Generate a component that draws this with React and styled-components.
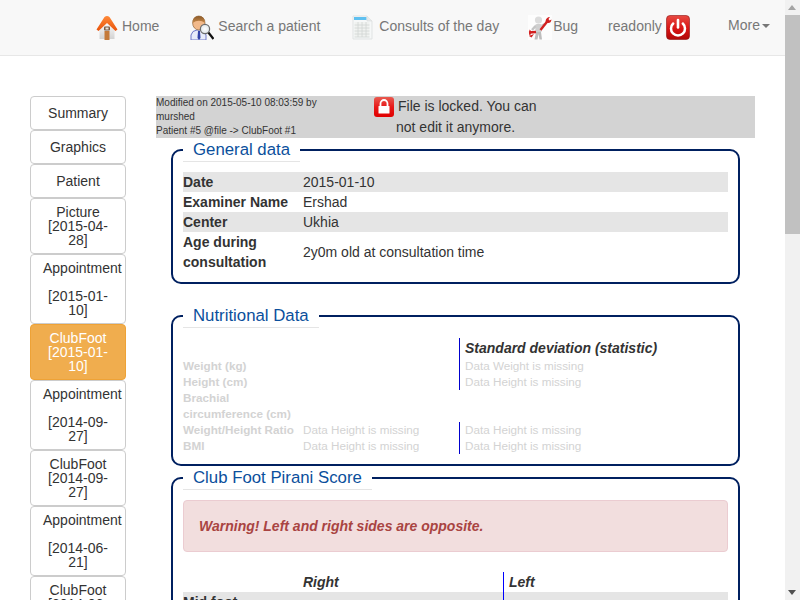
import React from "react";
import styled, { createGlobalStyle } from "styled-components";

const Global = createGlobalStyle`
  body { margin: 0; background: #fff; color: #333; font: 14px/20px "Liberation Sans", Arial, sans-serif; }
  * { box-sizing: border-box; }
`;

const Page = styled.div`
  padding-right: 15px;
`;
const ScrollRail = styled.div`
  position: fixed; top: 0; right: 0; bottom: 0; width: 15px; background: #f1f1f1;
`;
const ScrollThumb = styled.div`
  position: absolute; top: 15px; left: 0; width: 15px; height: 219px; background: #c1c1c1;
`;
const ScrollArrow = styled.i`
  position: absolute; left: 3px; width: 0; height: 0;
  border-left: 4.5px solid transparent; border-right: 4.5px solid transparent;
  ${p => p.$down
    ? "bottom: 5px; border-top: 5px solid #505050;"
    : "top: 5px; border-bottom: 5px solid #a3a3a3;"}
`;
const Navbar = styled.nav`
  display: flex; height: 56px; padding-left: 81px;
  background: #f8f8f8; border-bottom: 1px solid #e7e7e7; color: #777;
`;
const NavItem = styled.a`
  display: flex; align-items: flex-start; height: 55px; gap: ${p => p.$gap ?? 4}px;
  padding: 15px ${p => p.$right ?? 15}px 0 15px;
  & > span { line-height: 22px; }
`;
const MoreItem = styled.a`
  margin-left: auto; padding: 15px 15px 0; line-height: 20px; display: flex; align-items: flex-start;
`;
const Caret = styled.i`
  width: 0; height: 0; margin: 9px 0 0 2px;
  border-top: 4px solid #777; border-left: 4px solid transparent; border-right: 4px solid transparent;
`;
const Body = styled.div`
  display: flex; align-items: flex-start; padding: 40px 30px 0; gap: 30px; min-height: 1505px;
`;
const Side = styled.aside`
  width: 96px; flex: none; display: flex; flex-direction: column;
`;
const SideBtn = styled.button`
  display: block; width: 96px; min-height: 34px; padding: 6px 12px; margin: 0;
  font: 14px/14px "Liberation Sans", Arial, sans-serif; text-align: center;
  color: ${p => p.$active ? "#fff" : "#333"};
  background: ${p => p.$active ? "#f0ad4e" : "#fff"};
  border: 1px solid ${p => p.$active ? "#eea236" : "#ccc"};
  border-radius: 4px;
`;
const Main = styled.main`
  width: 599px; flex: none;
`;
const LockBar = styled.div`
  display: flex; height: 42px; background: #d3d3d3;
`;
const Meta = styled.div`
  width: 200px; font-size: 10px; line-height: 14px;
`;
const LockIconBox = styled.div`
  margin-left: 18px; width: 22px; padding-top: 1px; flex: none;
`;
const LockText = styled.div`
  width: 150px; line-height: 21px; text-indent: 2px;
  & > span { display: block; text-indent: 0; }
`;
const Field = styled.fieldset`
  min-width: 0; margin: 0 15px ${p => p.$spaced ? 20 : 0}px; padding: 0 10px 10px;
  border: 2px solid #002060; border-radius: 10px;
`;
const Legend = styled.legend`
  padding: 0 10px; margin: 0 0 10px; font-size: 16.8px; line-height: 23px; color: #0b4f9c;
  border-bottom: 1px solid #e5e5e5;
`;
const Row = styled.div`
  display: grid; grid-template-columns: 120px 1fr; align-items: center;
  background: ${p => p.$stripe ? "#e5e5e5" : "transparent"};
`;
const Label = styled.b`font-weight: 700;`;
const NutriGrid = styled.div`
  display: grid; grid-template-columns: 120px 156px 1fr;
  font-size: 11.7px; line-height: 16px; color: #d3d3d3;
`;
const NutriLabel = styled.b`font-weight: 700;`;
const DevCell = styled.div`
  border-left: ${p => p.$line ? "1px solid #0000cd" : "none"};
  padding-left: ${p => p.$line ? 5 : 6}px;
`;
const DevHead = styled(DevCell)`
  grid-column: 3; font: italic 700 14px/20px "Liberation Sans", Arial, sans-serif; color: #333;
`;
const Alert = styled.div`
  margin-bottom: 20px; padding: 15px; background: #f2dede; border: 1px solid #ebccd1; border-radius: 4px;
  color: #a94442; font-weight: 700; font-style: italic;
`;
const ScoreRow = styled.div`
  display: grid; grid-template-columns: 120px 200px 1fr; height: 20px;
  background: ${p => p.$stripe ? "#e5e5e5" : "transparent"};
`;
const ScoreHead = styled.b`font-style: italic; font-weight: 700;`;
const ScoreSide = styled(ScoreHead)`
  border-left: 1px solid #0000ff; padding-left: 5px;
`;

const HomeIcon = () => (
  <svg width="22" height="25" viewBox="0 0 22 25">
    <defs>
      <linearGradient id="roof" x1="0" y1="0" x2="0" y2="1"><stop offset="0" stopColor="#ff8a3a"/><stop offset="1" stopColor="#e8520a"/></linearGradient>
      <linearGradient id="wall" x1="0" y1="0" x2="0" y2="1"><stop offset="0" stopColor="#ffffff"/><stop offset="1" stopColor="#d2d2d2"/></linearGradient>
    </defs>
    <path d="M3.500 12 L11 6 L18.500 12 V24 H3.500 Z" fill="url(#wall)"/>
    <path d="M0.500 14.500 L8.500 2 Q11 0 13.500 2 L21.500 14.500 L19.500 16 L11 8 L2.500 16 Z" fill="url(#roof)"/>
    <rect x="8.500" y="16" width="5" height="9" fill="#c47a3a"/>
    <rect x="8" y="11.500" width="6" height="4" rx="1" fill="#7a5a44"/>
    <rect x="9.500" y="12.500" width="3" height="2" fill="#e9e2da"/>
  </svg>
);
const SearchIcon = () => (
  <svg width="24" height="25" viewBox="0 0 24 25">
    <defs>
      <linearGradient id="hair" x1="0" y1="0" x2="0" y2="1"><stop offset="0" stopColor="#8a5a2a"/><stop offset="1" stopColor="#c98a4a"/></linearGradient>
      <radialGradient id="lens"><stop offset="0" stopColor="#ffffff"/><stop offset="1" stopColor="#dfe6ea"/></radialGradient>
    </defs>
    <path d="M1 25 V20 Q2 15.500 7 15 H11 Q15 15.500 16 20 V25 Z" fill="#e8ecfa" stroke="#6f78c8" strokeWidth="1"/>
    <path d="M8 16 H10 L10.500 23 L9 25 L7.500 23 Z" fill="#3444a8"/>
    <ellipse cx="8.800" cy="8" rx="6.200" ry="7" fill="#f2b98a" stroke="#7a5226" strokeWidth=".6"/>
    <path d="M2.600 8 Q2.500 1 8.800 1 Q15 1 15 8 Q9 3.500 2.600 8 Z" fill="url(#hair)"/>
    <path d="M18 17 L23.500 24" stroke="#111" strokeWidth="2.200"/>
    <circle cx="15" cy="14" r="4.600" fill="url(#lens)" stroke="#6d6d6d" strokeWidth="1.200"/>
  </svg>
);
const SheetIcon = () => (
  <svg width="22" height="25" viewBox="0 0 22 25">
    <path d="M2 1 H16 L21 6 V24 H2 Z" fill="#f6f8f8" stroke="#e0e3e3" strokeWidth="1"/>
    <rect x="3" y="2" width="12.500" height="3" fill="#5fc0f0"/>
    <path d="M16 1 V6 H21" fill="#e8ebeb" stroke="#d6d9d9" strokeWidth=".6"/>
    <rect x="3.500" y="7" width="15" height="15" fill="#f0f2f0"/>
    <path d="M3.500 10 H18.500 M3.500 13 H18.500 M3.500 16 H18.500 M3.500 19 H18.500 M3.500 22 H18.500 M7 7 V22 M11 7 V22 M15 7 V22" stroke="#d0d6d3" strokeWidth=".8" fill="none"/>
  </svg>
);
const BugIcon = () => (
  <svg width="24" height="25" viewBox="0 0 24 25">
    <rect width="24" height="25" fill="#fdfdfd"/>
    <circle cx="10.500" cy="5" r="3.600" fill="#dcdcdc"/>
    <path d="M7 10 Q10.500 7.500 14 10 L13.500 17 H7.500 Z" fill="#cfcfcf"/>
    <path d="M8 17 L6.500 24.500 H9.500 L10.500 19 L11.500 24.500 H14 L13 17 Z" fill="#bdbdbd"/>
    <path d="M7.500 11 L4 15" stroke="#c4c4c4" strokeWidth="2.400"/>
    <path d="M14 10.500 L17 9" stroke="#c4c4c4" strokeWidth="2.400"/>
    <path d="M12.500 15 L20 5.500" stroke="#d22020" strokeWidth="2.400"/>
    <path d="M17.500 6.500 Q18 2 22 2 L20.500 4 L21.500 5.500 L23.500 4.500 Q23 8.500 19.500 8 Z" fill="#d22020"/>
    <path d="M1 17.500 L8 17" stroke="#d22020" strokeWidth="2.400"/>
    <path d="M1.500 14.500 L3.500 16.500 L2 21 L1 19 Z M6 19 L3.500 22.500 L1 21 Z" fill="#d22020"/>
  </svg>
);
const PowerIcon = () => (
  <svg width="24" height="25" viewBox="0 0 24 25">
    <defs><linearGradient id="redA" x1="0" y1="0" x2="0" y2="1"><stop offset="0" stopColor="#e84a42"/><stop offset=".55" stopColor="#d81414"/><stop offset="1" stopColor="#b00808"/></linearGradient></defs>
    <rect x=".5" y=".5" width="23" height="24" rx="3.500" fill="url(#redA)" stroke="#8f1010" strokeWidth=".6"/>
    <path d="M7.200 8.500 A7 7 0 1 0 16.800 8.500" fill="none" stroke="#fff" strokeWidth="2.500" strokeLinecap="round"/>
    <path d="M12 5 V12.500" stroke="#fff" strokeWidth="2.600" strokeLinecap="round"/>
  </svg>
);
const LockIcon = () => (
  <svg width="20" height="20" viewBox="0 0 20 20" style={{ display: "block" }}>
    <defs><linearGradient id="redB" x1="0" y1="0" x2="0" y2="1"><stop offset="0" stopColor="#e85a50"/><stop offset=".5" stopColor="#e81818"/><stop offset="1" stopColor="#e00000"/></linearGradient></defs>
    <rect width="20" height="20" rx="3" fill="url(#redB)"/>
    <path d="M6.500 9 V6.500 A3.500 3.500 0 0 1 13.500 6.500 V9" fill="none" stroke="#fff" strokeWidth="1.800"/>
    <rect x="4.500" y="9" width="11" height="7.500" rx=".5" fill="#fff"/>
  </svg>
);

const sideItems = [
  ["Summary"], ["Graphics"], ["Patient"],
  ["Picture [2015-04-28]"],
  ["Appointment", "[2015-01-10]"],
  ["ClubFoot [2015-01-10]", null, true],
  ["Appointment", "[2014-09-27]"],
  ["ClubFoot [2014-09-27]"],
  ["Appointment", "[2014-06-21]"],
  ["ClubFoot [2014-06-21]"],
];

export default function App() {
  return (
    <Page>
      <Global />
      <Navbar>
        <NavItem $right={16}><HomeIcon /><span>Home</span></NavItem>
        <NavItem $right={16}><SearchIcon /><span>Search a patient</span></NavItem>
        <NavItem $gap={6} $right={14}><SheetIcon /><span>Consults of the day</span></NavItem>
        <NavItem $gap={1}><BugIcon /><span>Bug</span></NavItem>
        <NavItem $gap={4}><span>readonly</span><PowerIcon /></NavItem>
        <MoreItem>More<Caret /></MoreItem>
      </Navbar>
      <Body>
        <Side>
          {sideItems.map(([a, b, active], i) => (
            <SideBtn key={i} $active={active}>
              {a}{b && <><br /><br />{b}</>}
            </SideBtn>
          ))}
        </Side>
        <Main>
          <LockBar>
            <Meta>Modified on 2015-05-10 08:03:59 by murshed<br />Patient #5 @file -&gt; ClubFoot #1</Meta>
            <LockIconBox><LockIcon /></LockIconBox>
            <LockText>File is locked. You can <span>not edit it anymore.</span></LockText>
          </LockBar>
          <Field $spaced>
            <Legend>General data</Legend>
            <Row $stripe><Label>Date</Label><span>2015-01-10</span></Row>
            <Row><Label>Examiner Name</Label><span>Ershad</span></Row>
            <Row $stripe><Label>Center</Label><span>Ukhia</span></Row>
            <Row><Label>Age during consultation</Label><span>2y0m old at consultation time</span></Row>
          </Field>
          <Field>
            <Legend>Nutritional Data</Legend>
            <NutriGrid>
              <DevHead $line>Standard deviation (statistic)</DevHead>
              <NutriLabel>Weight (kg)</NutriLabel><span /><DevCell $line>Data Weight is missing</DevCell>
              <NutriLabel>Height (cm)</NutriLabel><span /><DevCell $line>Data Height is missing</DevCell>
              <NutriLabel>Brachial circumference (cm)</NutriLabel><span /><DevCell />
              <NutriLabel>Weight/Height Ratio</NutriLabel><span>Data Height is missing</span><DevCell $line>Data Height is missing</DevCell>
              <NutriLabel>BMI</NutriLabel><span>Data Height is missing</span><DevCell $line>Data Height is missing</DevCell>
            </NutriGrid>
          </Field>
          <Field>
            <Legend>Club Foot Pirani Score</Legend>
            <Alert>Warning! Left and right sides are opposite.</Alert>
            <ScoreRow><span /><ScoreHead>Right</ScoreHead><ScoreSide>Left</ScoreSide></ScoreRow>
            <ScoreRow $stripe><Label>Mid foot</Label><span /><ScoreSide /></ScoreRow>
          </Field>
        </Main>
      </Body>
      <ScrollRail>
        <ScrollArrow />
        <ScrollThumb />
        <ScrollArrow $down />
      </ScrollRail>
    </Page>
  );
}
